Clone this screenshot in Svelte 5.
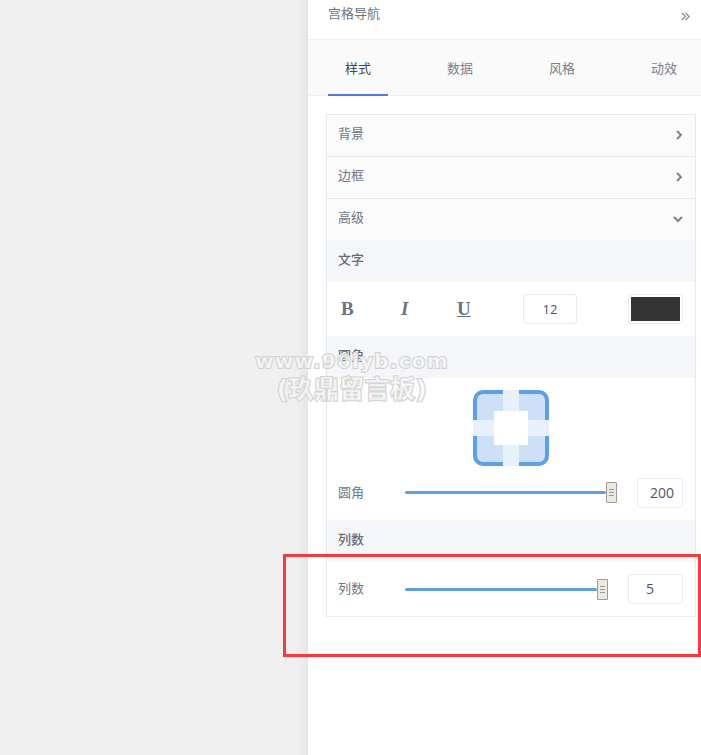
<script>
  const tabs = ['样式', '数据', '风格', '动效'];
  let active = $state(0);
</script>

<div class="page">
  <div class="canvas"></div>
  <aside class="panel">
    <header class="head">
      <span>宫格导航</span>
      <svg class="collapse" width="9" height="9" viewBox="0 0 9 9" fill="none" stroke="#7b8494" stroke-width="1.2">
        <path d="M.8.8l3.7 3.7-3.7 3.7M4.5.8l3.7 3.7-3.7 3.7" />
      </svg>
    </header>

    <nav class="tabs">
      {#each tabs as tab, i}
        <button class="tab" class:on={active === i} onclick={() => (active = i)}>{tab}</button>
      {/each}
    </nav>

    <div class="card">
      <div class="fold">
        <span>背景</span>
        <svg width="8" height="10" viewBox="0 0 8 10" fill="none" stroke="#7b8494" stroke-width="2"><path d="M2 1l4 4-4 4" /></svg>
      </div>
      <div class="fold">
        <span>边框</span>
        <svg width="8" height="10" viewBox="0 0 8 10" fill="none" stroke="#7b8494" stroke-width="2"><path d="M2 1l4 4-4 4" /></svg>
      </div>
      <div class="fold open">
        <span>高级</span>
        <svg width="10" height="8" viewBox="0 0 10 8" fill="none" stroke="#7b8494" stroke-width="2"><path d="M1 2l4 4 4-4" /></svg>
      </div>

      <div class="section">文字</div>
      <div class="text-row">
        <span class="glyph bold">B</span>
        <span class="glyph ital">I</span>
        <span class="glyph under">U</span>
        <div class="size">12</div>
        <div class="swatch"><i></i></div>
      </div>

      <div class="section">圆角</div>
      <div class="preview">
        <svg width="76" height="76" viewBox="0 0 76 76">
          <rect x="2" y="2" width="72" height="72" rx="8" fill="#cde0f7" stroke="#5f9ee9" stroke-width="4" />
          <rect x="30" y="0" width="16" height="76" fill="#e8f1fb" />
          <rect x="0" y="30" width="76" height="16" fill="#e8f1fb" />
          <rect x="21" y="21" width="34" height="34" fill="#fff" />
        </svg>
      </div>
      <div class="slider-row radius">
        <span class="label">圆角</span>
        <div class="track"><div class="line"></div><div class="thumb"><i></i><i></i><i></i></div></div>
        <div class="num wide-200">200</div>
      </div>

      <div class="section">列数</div>
      <div class="slider-row cols">
        <span class="label">列数</span>
        <div class="track"><div class="line"></div><div class="thumb"><i></i><i></i><i></i></div></div>
        <div class="num wide-5">5</div>
      </div>
    </div>
  </aside>

  <div class="mark">
    <div class="url">www.90lyb.com</div>
    <div class="zh">(玖鼎留言板)</div>
  </div>
  <div class="callout"></div>
</div>

<style>
  :global(body) {
    margin: 0;
    background: #fff;
  }
  .page {
    position: relative;
    display: flex;
    width: 701px;
    height: 755px;
    overflow: hidden;
    font-family: 'Open Sans', 'Noto Sans CJK SC', sans-serif;
    font-size: 13px;
    color: #6f7683;
  }
  .canvas {
    width: 308px;
    background: #f0f0f0;
    box-shadow: inset -14px 0 12px -12px #dedede;
  }
  .panel {
    flex: 1;
    background: #fff;
  }
  .head {
    display: flex;
    justify-content: space-between;
    align-items: center;
    box-sizing: border-box;
    height: 40px;
    padding: 0 11px 14px 20px;
    border-bottom: 1px solid #eef0f4;
  }
  .collapse {
    margin-top: 7px;
  }
  .tabs {
    display: flex;
    gap: 42px;
    box-sizing: border-box;
    height: 56px;
    padding-left: 20px;
    background: #fafafa;
    border-bottom: 1px solid #eef0f4;
  }
  .tab {
    flex: none;
    box-sizing: content-box;
    width: 60px;
    height: 54px;
    padding: 0;
    border: 0;
    border-bottom: 2px solid transparent;
    background: none;
    color: #7a808b;
    font: inherit;
  }
  .tab.on {
    color: #444a55;
    border-bottom-color: #5b78dc;
  }
  .card {
    box-sizing: border-box;
    width: 370px;
    margin: 18px 0 0 18px;
    border: 1px solid #e6ebf2;
  }
  .fold {
    display: flex;
    justify-content: space-between;
    align-items: center;
    box-sizing: border-box;
    height: 42px;
    padding: 0 12px 6px 11px;
    background: #fbfbfc;
    border-bottom: 1px solid #e6ebf2;
  }
  .fold svg {
    margin-top: 5px;
  }
  .fold.open {
    height: 41px;
    border-bottom: 0;
  }
  .section {
    height: 42px;
    padding-left: 11px;
    line-height: 38px;
    background: #f5f6fa;
    font-weight: 500;
    color: #666c78;
  }
  .text-row {
    display: flex;
    align-items: center;
    height: 54px;
    padding: 0 12px 0 14px;
  }
  .glyph {
    width: 60px;
    font-family: 'Liberation Serif', serif;
    font-size: 19px;
    font-weight: 700;
    color: #6b7280;
  }
  .ital {
    font-style: italic;
    width: 56px;
  }
  .under {
    text-decoration: underline;
    width: 66px;
  }
  .size {
    box-sizing: border-box;
    width: 54px;
    height: 30px;
    line-height: 28px;
    border: 1px solid #e6ebf2;
    border-radius: 3px;
    text-align: center;
    font-size: 13px;
    color: #4c5260;
  }
  .swatch {
    box-sizing: border-box;
    width: 55px;
    height: 30px;
    margin-left: auto;
    padding: 2px;
    border: 1px solid #e6ebf2;
    border-radius: 3px;
  }
  .swatch i {
    display: block;
    height: 100%;
    background: #333;
  }
  .preview {
    display: flex;
    justify-content: center;
    padding: 12px 0 0;
  }
  .preview svg {
    display: block;
  }
  .slider-row {
    display: flex;
    align-items: center;
    height: 54px;
    padding: 0 12px 0 11px;
  }
  .radius .track {
    margin-top: -2px;
  }
  .label {
    flex: none;
    width: 67px;
    margin-top: -3px;
  }
  .track {
    display: flex;
    align-items: center;
    flex: 1;
  }
  .line {
    flex: 1;
    height: 3px;
    background: #609de6;
    border-radius: 2px;
  }
  .thumb {
    display: flex;
    flex-direction: column;
    justify-content: center;
    gap: 2px;
    flex: none;
    box-sizing: border-box;
    width: 11px;
    height: 21px;
    padding: 0 2px;
    background: #ece8e3;
    border: 1px solid #a09a92;
    border-radius: 1px;
  }
  .thumb i {
    display: block;
    height: 1px;
    background: #a09a92;
  }
  .num {
    flex: none;
    box-sizing: border-box;
    height: 30px;
    line-height: 28px;
    border: 1px solid #e6ebf2;
    border-radius: 3px;
    font-size: 14px;
    color: #4f5562;
  }
  .wide-200 {
    width: 46px;
    margin-left: 20px;
    padding-left: 12px;
  }
  .wide-5 {
    width: 55px;
    margin-left: 20px;
    padding-left: 17px;
  }
  .mark {
    position: absolute;
    left: 232px;
    top: 348px;
    width: 240px;
    text-align: center;
    color: rgba(255, 255, 255, 0.65);
    -webkit-text-stroke: 2px #d2d2d2;
    paint-order: stroke fill;
    font-family: 'DejaVu Sans', 'Noto Sans CJK SC', sans-serif;
    font-weight: 700;
    pointer-events: none;
  }
  .url {
    font-size: 20px;
    line-height: 26px;
    letter-spacing: 1.2px;
  }
  .zh {
    font-size: 25px;
    line-height: 32px;
    letter-spacing: 0.4px;
  }
  .callout {
    position: absolute;
    left: 283px;
    top: 554px;
    width: 418px;
    height: 103px;
    box-sizing: border-box;
    border: 3px solid #f53c3c;
    pointer-events: none;
  }
</style>
